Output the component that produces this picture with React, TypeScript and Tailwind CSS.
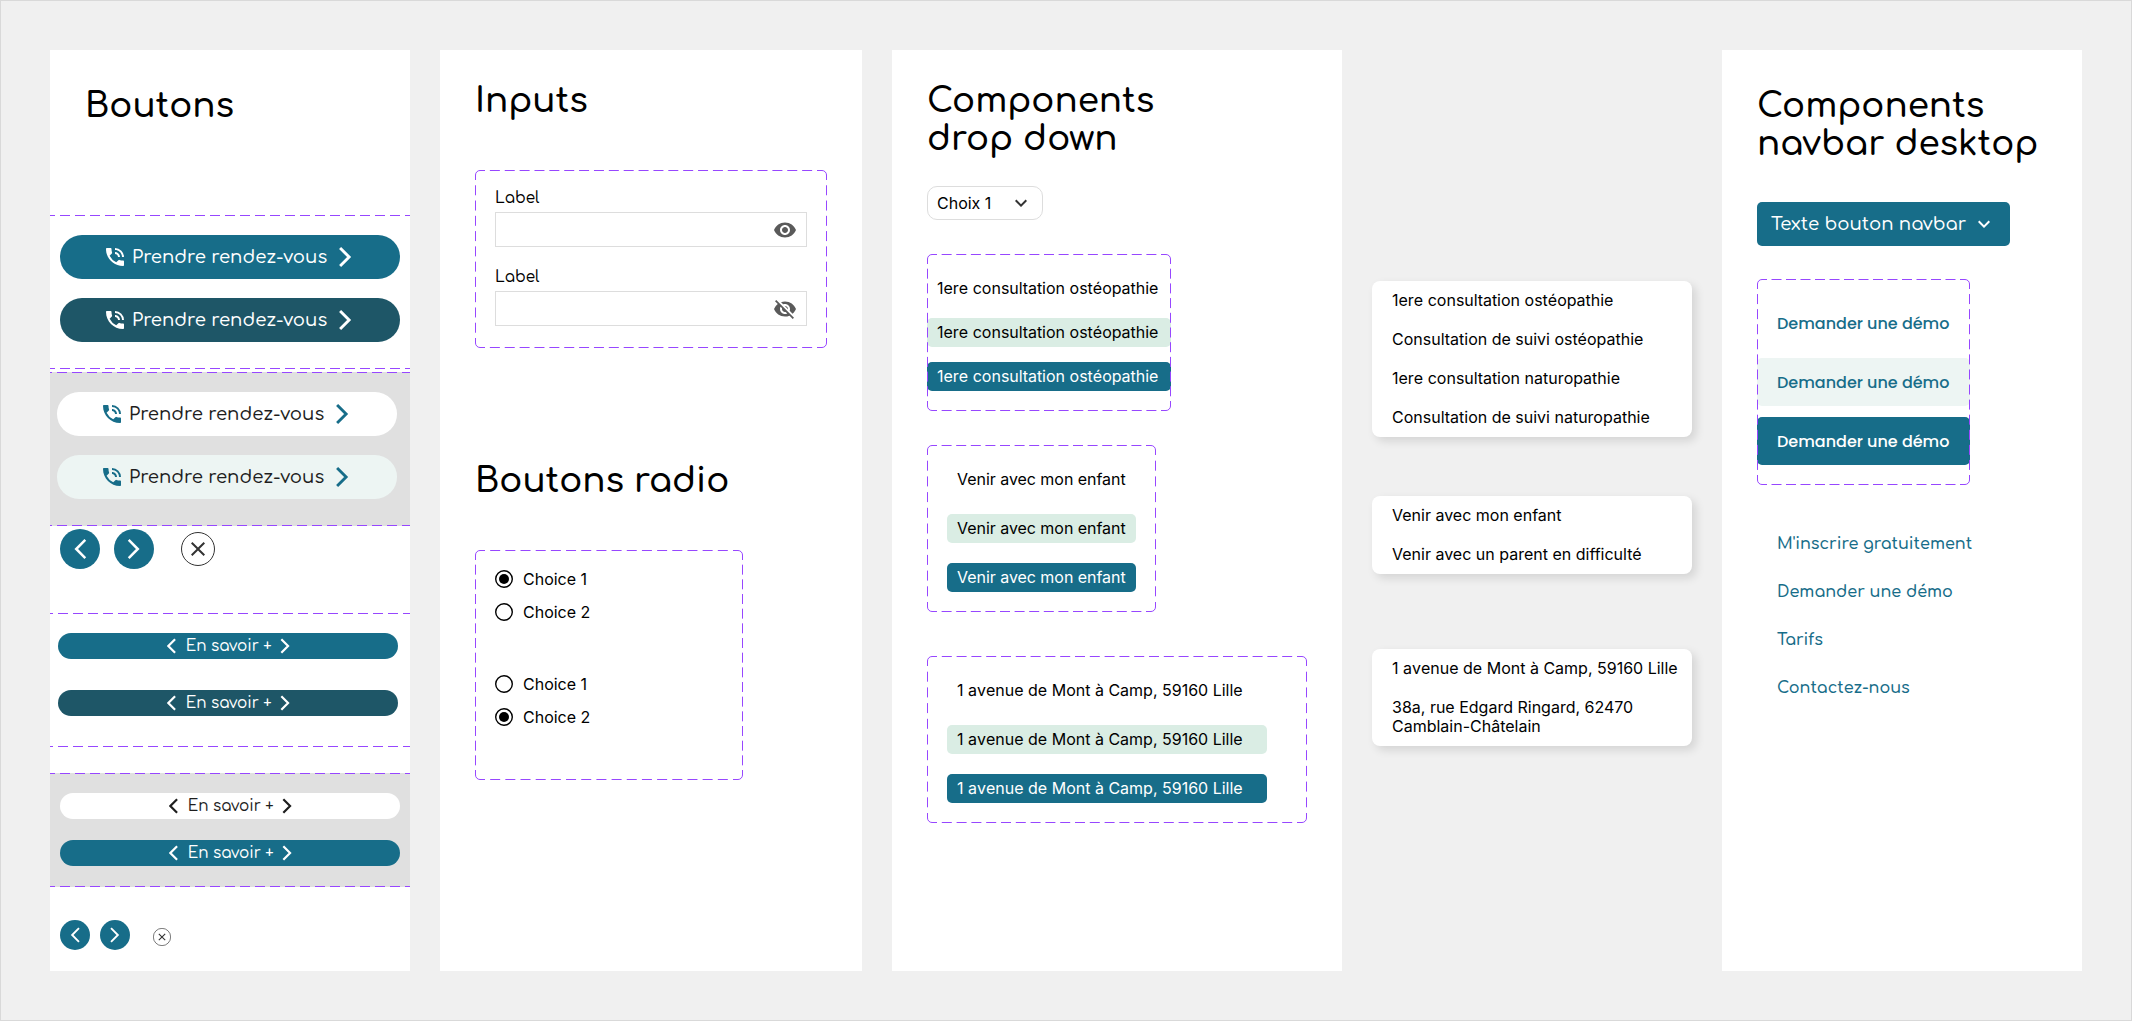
import type { ReactNode } from 'react';
import { MdPhoneInTalk, MdKeyboardArrowDown, MdVisibility, MdVisibilityOff, MdClose } from 'react-icons/md';

function DashLine({ phase }: { phase: string }) {
  return (
    <div className={`h-px w-full bg-[linear-gradient(90deg,#9747ff_10px,transparent_10px)] bg-[length:15px_1px] ${phase}`} />
  );
}

/* Purple dashed frame with rounded corners, drawn over the box it surrounds. */
function DashFrame({ w, h }: { w: number; h: number }) {
  const dash = (len: number) => {
    const n = Math.round((len + 5) / 15);
    return `10 ${((len - 10 * n) / (n - 1)).toFixed(3)}`;
  };
  const r = 5;
  return (
    <svg className="pointer-events-none absolute inset-0" width={w} height={h} viewBox={`0 0 ${w} ${h}`} fill="none" stroke="#9747ff">
      <path d={`M${r} .5H${w - r}M${r} ${h - 0.5}H${w - r}`} strokeDasharray={dash(w)} strokeDashoffset={r} />
      <path d={`M.5 ${r}V${h - r}M${w - 0.5} ${r}V${h - r}`} strokeDasharray={dash(h)} strokeDashoffset={r} />
      <path d={`M.5 ${r}A4.5 4.5 0 0 1 ${r} .5M${w - r} .5A4.5 4.5 0 0 1 ${w - 0.5} ${r}M${w - 0.5} ${h - r}A4.5 4.5 0 0 1 ${w - r} ${h - 0.5}M${r} ${h - 0.5}A4.5 4.5 0 0 1 .5 ${h - r}`} />
    </svg>
  );
}

function Title({ children, className = '' }: { children: ReactNode; className?: string }) {
  return <h1 className={`font-[Comfortaa,Lato,sans-serif] text-[34.15px] leading-[38.4px] font-semibold whitespace-nowrap text-black ${className}`}>{children}</h1>;
}

function Chevron({ dir, size, className = '' }: { dir: 'left' | 'right'; size: number; className?: string }) {
  return (
    <svg width={size} height={size} viewBox="0 0 24 24" fill="none" stroke="currentColor" strokeWidth="2.9" className={`shrink-0 ${className}`}>
      <path d={dir === 'left' ? 'M10.8 3L1.8 12L10.8 21' : 'M7.1 3L16.1 12L7.1 21'} />
    </svg>
  );
}

function CallButton({ className, icon = 'text-white' }: { className: string; icon?: string }) {
  return (
    <button className={`flex h-11 w-[340px] items-center rounded-[22px] pl-[43px] ${className}`}>
      <MdPhoneInTalk size={24} className={icon} />
      <span className="ml-[5px] w-[201px] text-left font-[Comfortaa,Lato,sans-serif] text-[18.1px] leading-5 font-medium whitespace-nowrap">Prendre rendez-vous</span>
      <Chevron dir="right" size={24} className={icon} />
    </button>
  );
}

function MoreButton({ className }: { className: string }) {
  return (
    <button className={`flex h-[26px] w-[340px] items-center rounded-[13px] pl-[108.7px] ${className}`}>
      <Chevron dir="left" size={18} />
      <span className="mt-[2px] ml-px w-[90.3px] text-left font-[Comfortaa,Lato,sans-serif] text-[15.2px] leading-[18px] font-medium whitespace-nowrap">En savoir +</span>
      <Chevron dir="right" size={18} />
    </button>
  );
}

function Arrow({ dir, size }: { dir: 'left' | 'right'; size: number }) {
  return (
    <svg width={size} height={size} viewBox="0 0 40 40" fill="none" stroke="white" strokeWidth="2.5">
      <path d={dir === 'left' ? 'M25.3 10.9L16.2 20L25.3 29.1' : 'M14.7 10.9L23.8 20L14.7 29.1'} />
    </svg>
  );
}

function Round({ dir, big }: { dir: 'left' | 'right'; big?: boolean }) {
  return (
    <button className={`rounded-full bg-[#176d89] ${big ? 'size-10' : 'size-[30px]'}`}>
      <Arrow dir={dir} size={big ? 40 : 30} />
    </button>
  );
}

function Radio({ label, checked }: { label: string; checked?: boolean }) {
  return (
    <label className="flex h-[18px] items-center gap-[10px] text-base leading-[18px]">
      <svg width="18" height="18" viewBox="0 0 18 18">
        <circle cx="9" cy="9" r="8.3" fill="none" stroke="black" strokeWidth="1.4" />
        {checked && <circle cx="9" cy="9" r="5" />}
      </svg>
      {label}
    </label>
  );
}

function Field({ children }: { children: ReactNode }) {
  return (
    <div>
      <div className="font-[Comfortaa,Lato,sans-serif] text-[15.2px] leading-5 font-medium">Label</div>
      <div className="mt-[3px] flex h-[35px] items-center justify-end border border-[#dddddd] pr-[9px] text-[#5a5a5a]">{children}</div>
    </div>
  );
}

const rowTones = ['', 'bg-[#daede4]', 'bg-[#176d89] text-white'];

function Options({ label, pad, width, height, row, gap }: { label: string; pad: string; width: number; height: number; row: string; gap: string }) {
  return (
    <div className={`relative flex flex-col ${pad} ${gap}`} style={{ width, height }}>
      {rowTones.map((tone) => (
        <div key={tone} className={`h-[29px] rounded-[5px] px-[10px] text-base leading-[29px] whitespace-nowrap ${row} ${tone}`}>{label}</div>
      ))}
      <DashFrame w={width} h={height} />
    </div>
  );
}

function Menu({ items, className = '' }: { items: string[]; className?: string }) {
  return (
    <ul className={`w-[320px] rounded-[8px] bg-white shadow-[4px_4px_10px_rgba(0,0,0,0.12)] ${className}`}>
      {items.map((t) => (
        <li key={t} className={`py-[10px] pr-[9px] pl-5 text-base leading-[19px] ${t.startsWith('1') ? '[font-kerning:none]' : ''}`}>{t}</li>
      ))}
    </ul>
  );
}

const navTones = ['text-[#176d89]', 'bg-[#edf5f3] text-[#176d89]', 'bg-[#176d89] text-white'];
const links = ["M'inscrire gratuitement", 'Demander une démo', 'Tarifs', 'Contactez-nous'];

export default function App() {
  return (
    <div className="flex h-[1021px] w-[2132px] gap-[30px] overflow-hidden border border-[#d9d9d9] bg-[#f0f0f0] p-[49px] font-[Inter,sans-serif] text-black">
      <section className="h-[921px] w-[360px] shrink-0 bg-white">
        <div className="h-[165px] pt-[37px] pl-[35px]"><Title>Boutons</Title></div>
        <div className="flex h-[154px] flex-col">
          <DashLine phase="bg-[position:-5px_0]" />
          <div className="flex flex-1 flex-col gap-[19px] pt-[19px] pl-[10px]">
            <CallButton className="bg-[#176d89] text-white" />
            <CallButton className="bg-[#1e5667] text-white" />
          </div>
          <DashLine phase="bg-[position:-5px_0]" />
        </div>
        <div className="mt-[3px] flex h-[154px] flex-col bg-[#e0e0e0]">
          <DashLine phase="bg-[position:-8px_0]" />
          <div className="flex flex-1 flex-col gap-[19px] pt-[19px] pl-[7px]">
            <CallButton className="bg-white text-[#1e1e1e]" icon="text-[#176d89]" />
            <CallButton className="bg-[#edf5f3] text-[#1e1e1e]" icon="text-[#176d89]" />
          </div>
          <DashLine phase="bg-[position:-8px_0]" />
        </div>
        <div className="mt-[3px] flex h-10 items-center pl-[10px]">
          <Round dir="left" big />
          <div className="ml-[14px] flex"><Round dir="right" big /></div>
          <button className="ml-[27px] flex size-[34px] items-center justify-center rounded-full border border-[#333333] text-[#333333]"><MdClose size={24} className="shrink-0" /></button>
        </div>
        <div className="mt-[44px] flex h-[134px] flex-col">
          <DashLine phase="bg-[position:-7px_0]" />
          <div className="flex flex-1 flex-col gap-[31px] pt-[19px] pl-[8px]">
            <MoreButton className="bg-[#176d89] text-white" />
            <MoreButton className="bg-[#1e5667] text-white" />
          </div>
          <DashLine phase="bg-[position:-7px_0]" />
        </div>
        <div className="mt-[26px] flex h-[114px] flex-col bg-[#e0e0e0]">
          <DashLine phase="bg-[position:-5px_0]" />
          <div className="flex flex-1 flex-col gap-[21px] pt-[19px] pl-[10px]">
            <MoreButton className="bg-white text-[#1e1e1e]" />
            <MoreButton className="bg-[#176d89] text-white" />
          </div>
          <DashLine phase="bg-[position:-5px_0]" />
        </div>
        <div className="mt-[33px] flex h-[30px] pl-[10px]">
          <Round dir="left" />
          <div className="ml-[10.4px] flex"><Round dir="right" /></div>
          <svg className="mt-2 ml-[22.6px]" width="18" height="18" viewBox="0 0 18 18" fill="none" stroke="#333333">
            <circle cx="9" cy="9" r="8.65" strokeWidth="0.65" />
            <path d="M5.8 5.8L12.2 12.2M12.2 5.8L5.8 12.2" strokeWidth="1.1" />
          </svg>
        </div>
      </section>

      <section className="h-[921px] w-[422px] shrink-0 bg-white pl-[35px]">
        <Title className="pt-[32px]">Inputs</Title>
        <div className="relative mt-[49.6px] h-[178px] w-[352px] px-5 pt-[19px]">
          <Field><MdVisibility size={24} /></Field>
          <div className="mt-[21px]"><Field><MdVisibilityOff size={24} /></Field></div>
          <DashFrame w={352} h={178} />
        </div>
        <Title className="mt-[114px]">Boutons radio</Title>
        <div className="relative mt-[49.6px] h-[230px] w-[268px] px-5 pt-5">
          <div className="flex flex-col gap-[15px]">
            <Radio label="Choice 1" checked />
            <Radio label="Choice 2" />
          </div>
          <div className="mt-[54px] flex flex-col gap-[15px]">
            <Radio label="Choice 1" />
            <Radio label="Choice 2" checked />
          </div>
          <DashFrame w={268} h={230} />
        </div>
      </section>

      <section className="h-[921px] w-[450px] shrink-0 bg-white pl-[35px]">
        <Title className="pt-[32px]">Components<br />drop down</Title>
        <div className="mt-[27.2px] flex h-[34px] w-[116px] items-center justify-between rounded-[10px] border border-[#dddddd] pr-[9px] pl-[9px] text-base">
          Choix 1
          <MdKeyboardArrowDown size={24} className="text-[#333333]" />
        </div>
        <div className="mt-[34px]"><Options label="1ere consultation ostéopathie" pad="pt-5" gap="gap-[15px]" row="w-full [font-kerning:none]" width={244} height={157} /></div>
        <div className="mt-[34px]"><Options label="Venir avec mon enfant" pad="pt-5 pl-5" gap="gap-5" row="w-[189px] tracking-[-0.04px]" width={229} height={167} /></div>
        <div className="mt-[44px]"><Options label="1 avenue de Mont à Camp, 59160 Lille" pad="pt-5 pl-5" gap="gap-5" row="w-[320px] [font-kerning:none]" width={380} height={167} /></div>
      </section>

      <section className="w-[320px] shrink-0 pt-[231px]">
        <Menu items={['1ere consultation ostéopathie', 'Consultation de suivi ostéopathie', '1ere consultation naturopathie', 'Consultation de suivi naturopathie']} />
        <Menu className="mt-[59px]" items={['Venir avec mon enfant', 'Venir avec un parent en difficulté']} />
        <Menu className="mt-[75px]" items={['1 avenue de Mont à Camp, 59160 Lille', '38a, rue Edgard Ringard, 62470 Camblain-Châtelain']} />
      </section>

      <section className="h-[921px] w-[360px] shrink-0 bg-white pl-[35px]">
        <Title className="pt-[37px]">Components<br />navbar desktop</Title>
        <button className="mt-[38.2px] flex h-11 w-[253px] items-center justify-between rounded-[5px] bg-[#176d89] pr-[14px] pl-[14px] text-white">
          <span className="font-[Comfortaa,Lato,sans-serif] text-[18.1px] leading-5 font-medium whitespace-nowrap">Texte bouton navbar</span>
          <MdKeyboardArrowDown size={24} />
        </button>
        <div className="relative mt-[33px] flex h-[206px] w-[213px] flex-col gap-[11px] pt-5">
          {navTones.map((tone) => (
            <div key={tone} className={`h-12 rounded-[5px] pl-5 font-[Poppins,Inter,sans-serif] text-base leading-[50px] font-medium whitespace-nowrap ${tone}`}>Demander une démo</div>
          ))}
          <DashFrame w={213} h={206} />
        </div>
        <nav className="mt-[50px] flex flex-col gap-[30px] pl-5 font-[Comfortaa,Lato,sans-serif] text-base leading-[18px] font-semibold text-[#176d89]">
          {links.map((l) => <a key={l}>{l}</a>)}
        </nav>
      </section>
    </div>
  );
}
